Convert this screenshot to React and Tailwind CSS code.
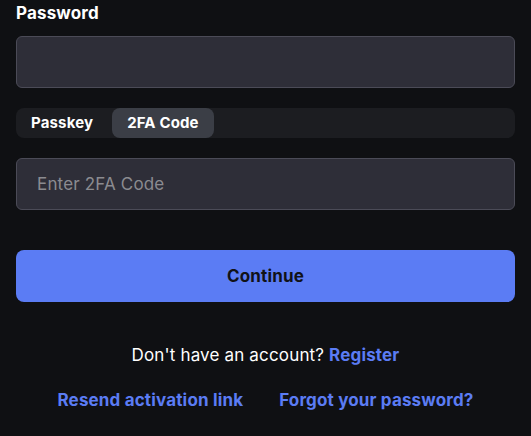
import React from 'react'

const App = () => {
  return (
    <div className='min-h-screen bg-[#0f1013] px-4 pt-[1px] font-["Inter",sans-serif] tracking-[0.01em] text-white'>
      <label className='block text-[17px] font-bold leading-6'>Password</label>
      <input
        type='password'
        className='mt-[11px] block h-[52px] w-full rounded-md border border-[#4b4b57] bg-[#2e2e38] px-5 outline-none'
      />

      {/* tabs */}
      <div className='mt-5 flex h-[30px] w-full items-stretch gap-1 rounded-lg bg-[#1c1d21]'>
        <button className='rounded-lg px-[15px] text-[15px] font-bold tracking-[0.01em] text-white'>Passkey</button>
        <button className='rounded-lg bg-[#3b3e46] px-[15px] text-[15px] font-bold tracking-[0.01em] text-white'>2FA Code</button>
      </div>

      <input
        type='text'
        placeholder='Enter 2FA Code'
        className='mt-5 block h-[52px] w-full rounded-md border border-[#4b4b57] bg-[#2e2e38] px-5 text-[17px] tracking-[0.01em] text-white outline-none placeholder:text-[#8b8b90]'
      />

      <button className='mt-10 h-[52px] w-full rounded-lg bg-[#5b7cf4] pt-[2px] text-[17px] font-bold tracking-[0.01em] text-[#111217]'>
        Continue
      </button>

      <p className='mt-[41px] text-center text-[17px] leading-6'>
        Don't have an account? <a className='font-bold text-[#5b7cf4]'>Register</a>
      </p>

      <div className='mt-[21px] flex justify-center gap-9 text-[17px] font-bold leading-6 text-[#5b7cf4]'>
        <a>Resend activation link</a>
        <a>Forgot your password?</a>
      </div>
    </div>
  )
}

export default App
